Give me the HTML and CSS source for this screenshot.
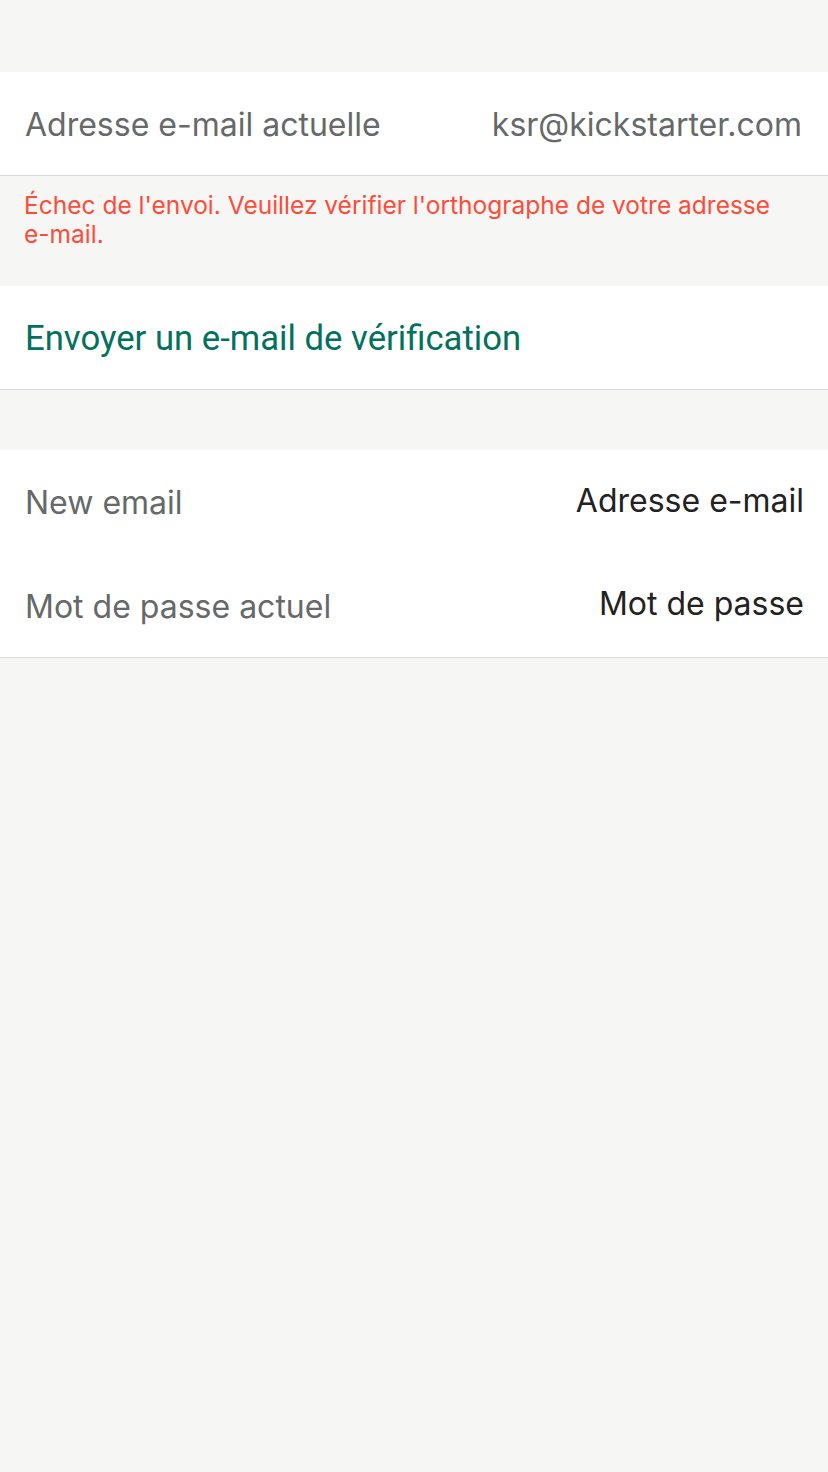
FILE: index.html
```html
<!DOCTYPE html>
<html lang="fr">
<head>
<meta charset="utf-8">
<link rel="stylesheet" href="styles.css">
</head>
<body>
<div class="page">
  <div class="spacer-top"></div>
  <section class="group">
    <div class="row">
      <span class="label">Adresse e-mail actuelle</span>
      <span class="value">ksr@kickstarter.com</span>
    </div>
  </section>
  <p class="error">Échec de l'envoi. Veuillez vérifier l'orthographe de votre adresse <span class="nowrap">e-mail.</span></p>
  <section class="group">
    <div class="row">
      <span class="action">Envoyer un e-mail de vérification</span>
    </div>
  </section>
  <div class="spacer-mid"></div>
  <section class="group">
    <div class="row row-field">
      <span class="label">New email</span>
      <span class="placeholder">Adresse e-mail</span>
    </div>
    <div class="row row-field">
      <span class="label">Mot de passe actuel</span>
      <span class="placeholder">Mot de passe</span>
    </div>
  </section>
</div>
</body>
</html>
```

FILE: styles.css
```css
html, body {
  margin: 0;
  padding: 0;
  background: #f6f6f4;
}
.page {
  width: 828px;
  min-height: 1472px;
  font-family: Inter, "Noto Sans", sans-serif;
}
.spacer-top { height: 72px; }
.spacer-mid { height: 60px; }
.group {
  background: #ffffff;
  border-bottom: 1px solid #dadada;
}
.row {
  height: 103px;
  display: flex;
  align-items: center;
  justify-content: space-between;
  padding: 0 26px 0 25px;
}
.group .row-field:first-child { height: 104px; }
.label {
  font-size: 32px;
  color: #656969;
  margin-top: 1px;
}
.value {
  font-size: 32px;
  color: #656969;
  margin-top: 1px;
}
.placeholder {
  font-size: 32px;
  color: #222222;
  margin-right: -2px;
  margin-top: -4px;
}
.action {
  font-family: Roboto, sans-serif;
  font-size: 34.7px;
  color: #037060;
}
.error {
  margin: 0;
  height: 110px;
  box-sizing: border-box;
  padding: 15px 30px 0 24px;
  font-size: 24.5px;
  line-height: 29px;
  color: #ff4b3a;
}
.nowrap { white-space: nowrap; }
```
